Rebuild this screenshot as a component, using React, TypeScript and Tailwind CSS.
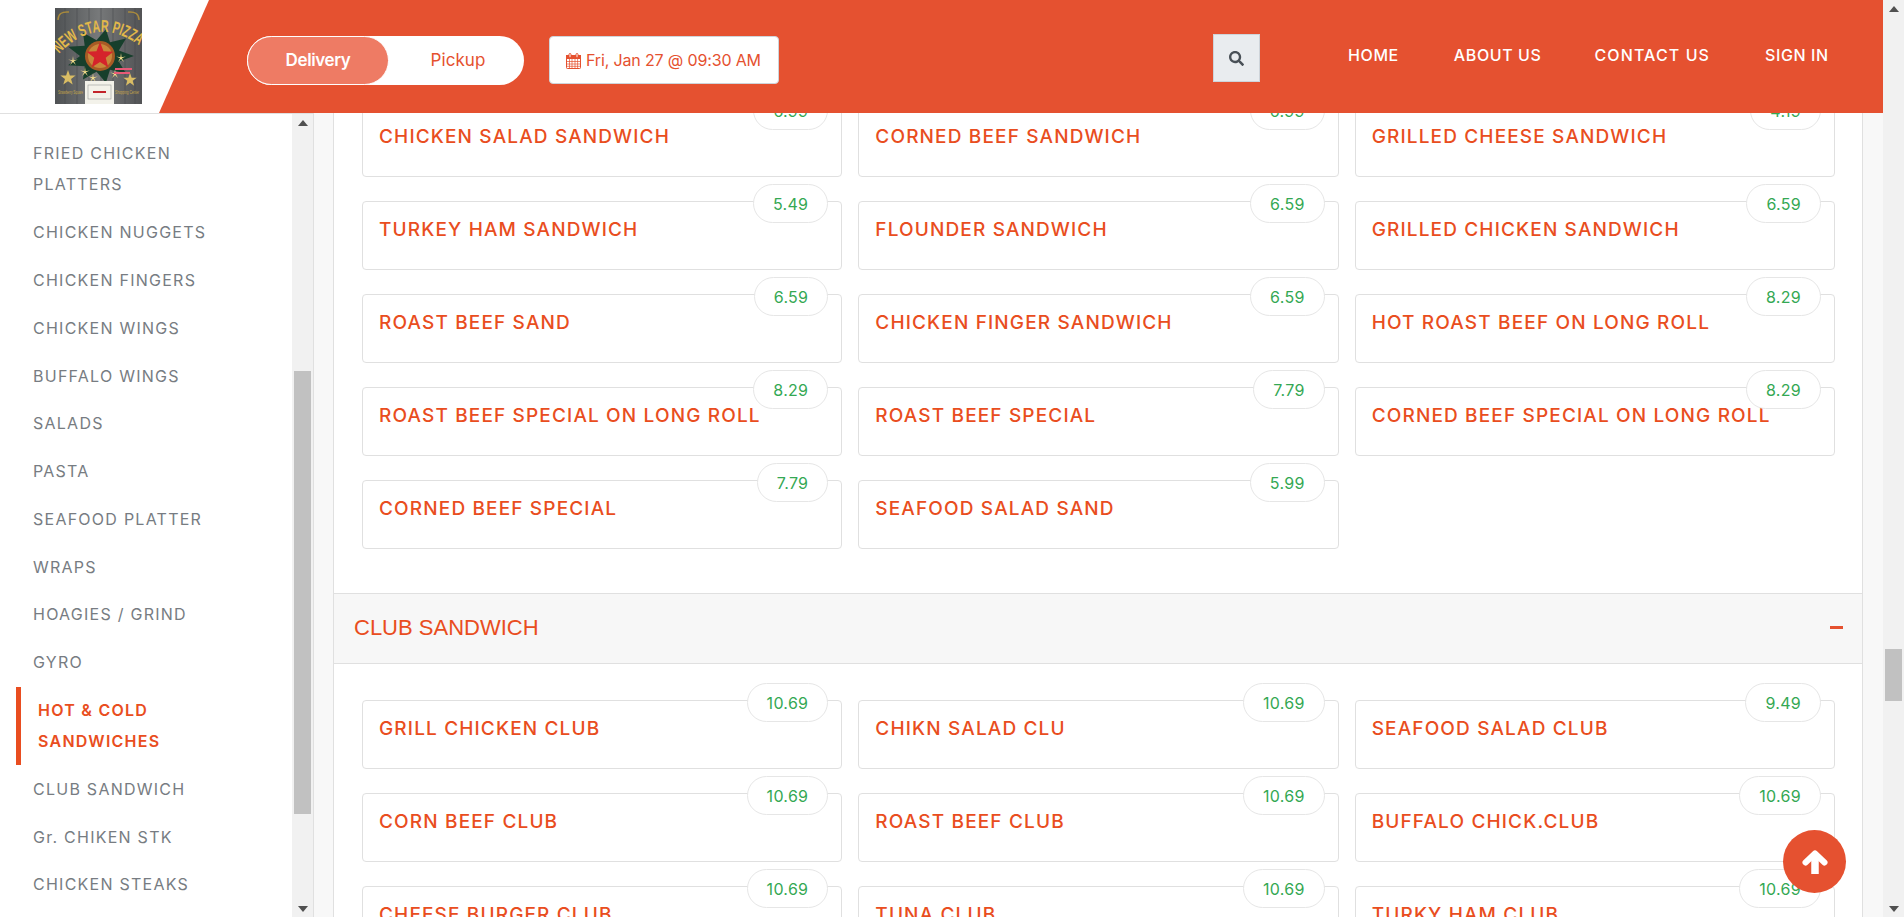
import { FaSearch } from "react-icons/fa";

const FONT = "[font-family:Inter,'Liberation_Sans',sans-serif]";

const menu: { t: string; active?: boolean }[] = [
  { t: "FRIED CHICKEN PLATTERS" },
  { t: "CHICKEN NUGGETS" },
  { t: "CHICKEN FINGERS" },
  { t: "CHICKEN WINGS" },
  { t: "BUFFALO WINGS" },
  { t: "SALADS" },
  { t: "PASTA" },
  { t: "SEAFOOD PLATTER" },
  { t: "WRAPS" },
  { t: "HOAGIES / GRIND" },
  { t: "GYRO" },
  { t: "HOT & COLD SANDWICHES", active: true },
  { t: "CLUB SANDWICH" },
  { t: "Gr. CHIKEN STK" },
  { t: "CHICKEN STEAKS" },
];

const hot: [string, string][] = [
  ["CHICKEN SALAD SANDWICH", "6.99"],
  ["CORNED BEEF SANDWICH", "6.99"],
  ["GRILLED CHEESE SANDWICH", "4.19"],
  ["TURKEY HAM SANDWICH", "5.49"],
  ["FLOUNDER SANDWICH", "6.59"],
  ["GRILLED CHICKEN SANDWICH", "6.59"],
  ["ROAST BEEF SAND", "6.59"],
  ["CHICKEN FINGER SANDWICH", "6.59"],
  ["HOT ROAST BEEF ON LONG ROLL", "8.29"],
  ["ROAST BEEF SPECIAL ON LONG ROLL", "8.29"],
  ["ROAST BEEF SPECIAL", "7.79"],
  ["CORNED BEEF SPECIAL ON LONG ROLL", "8.29"],
  ["CORNED BEEF SPECIAL", "7.79"],
  ["SEAFOOD SALAD SAND", "5.99"],
];

const club: [string, string][] = [
  ["GRILL CHICKEN CLUB", "10.69"],
  ["CHIKN SALAD CLU", "10.69"],
  ["SEAFOOD SALAD CLUB", "9.49"],
  ["CORN BEEF CLUB", "10.69"],
  ["ROAST BEEF CLUB", "10.69"],
  ["BUFFALO CHICK.CLUB", "10.69"],
  ["CHEESE BURGER CLUB", "10.69"],
  ["TUNA CLUB", "10.69"],
  ["TURKY HAM CLUB", "10.69"],
];

function Logo() {
  const burst = Array.from({ length: 18 }, (_, i) => {
    const a = (i / 18) * Math.PI * 2;
    const r = i % 2 === 0 ? 34 : 20;
    return `${45 + Math.cos(a) * r},${48 + Math.sin(a) * r * 0.8}`;
  }).join(" ");
  const star = (cx: number, cy: number, R: number, r: number) =>
    Array.from({ length: 10 }, (_, i) => {
      const a = -Math.PI / 2 + (i * Math.PI) / 5;
      const q = i % 2 === 0 ? R : r;
      return `${cx + Math.cos(a) * q},${cy + Math.sin(a) * q}`;
    }).join(" ");
  return (
    <svg width="87" height="96" viewBox="0 0 87 96" className="block">
      <defs>
        <linearGradient id="wood" x1="0" x2="1" y1="0" y2="0">
          <stop offset="0" stopColor="#4f5254" />
          <stop offset="0.5" stopColor="#77797a" />
          <stop offset="1" stopColor="#525355" />
        </linearGradient>
        <path id="arc" d="M4 46 Q42 6 85 38" fill="none" />
      </defs>
      <rect width="87" height="96" fill="url(#wood)" />
      {[10, 22, 34, 46, 58, 70, 80].map((x) => (
        <line key={x} x1={x} x2={x} y1="0" y2="96" stroke="#45474a" strokeWidth="1" opacity="0.5" />
      ))}
      <path d="M3 12 Q3 3 14 4 M73 4 Q84 3 84 12" stroke="#a98a3c" strokeWidth="1.5" fill="none" />
      <polygon points={burst} fill="#173f2c" />
      <text fontSize="17" fontWeight="700" fill="#e2b84a" fontFamily="'Liberation Sans',sans-serif">
        <textPath href="#arc" textLength="90" lengthAdjust="spacingAndGlyphs">NEW STAR PIZZA</textPath>
      </text>
      <circle cx="45" cy="48" r="15" fill="#a85b25" />
      <circle cx="45" cy="48" r="12" fill="#c9873b" />
      <polygon points={star(45, 48, 14, 6)} fill="#d5232b" />
      {[[18, 53], [30, 64], [66, 50], [60, 66], [38, 70]].map(([x, y]) => (
        <polygon key={`${x}-${y}`} points={star(x, y, 5, 1)} fill="#f4dd8c" />
      ))}
      <polygon points={star(13, 70, 8, 3.2)} fill="#d9bd64" />
      <polygon points={star(75, 72, 7, 2.8)} fill="#d9bd64" />
      <rect x="30" y="73" width="29" height="23" fill="#f3f2ea" />
      <rect x="33" y="77" width="23" height="14" fill="none" stroke="#999" strokeWidth="0.6" />
      <rect x="38" y="83" width="13" height="2" fill="#c3242a" />
      <rect x="60" y="60" width="17" height="2" fill="#e75a77" />
      <rect x="59" y="64" width="16" height="2" fill="#e75a77" />
      <text x="3" y="86" textLength="25" lengthAdjust="spacingAndGlyphs" fontSize="5" fill="#c9a849" fontFamily="'Liberation Sans',sans-serif">Strawberry Square</text>
      <text x="60" y="86" textLength="24" lengthAdjust="spacingAndGlyphs" fontSize="5" fill="#c9a849" fontFamily="'Liberation Sans',sans-serif">Shopping Center</text>
    </svg>
  );
}

function CalendarIcon() {
  return (
    <svg width="15" height="16" viewBox="0 0 15 16" className="mt-[3px] shrink-0" fill="none" stroke="#e5512f">
      <rect x="0.5" y="2.5" width="14" height="13" rx="0.8" />
      <rect x="0.5" y="2.5" width="14" height="3" fill="#e5512f" />
      <path d="M0.5 8.5h14M0.5 11h14M0.5 13.3h14M3.5 5.5v10M6 5.5v10M9 5.5v10M11.6 5.5v10" strokeWidth="0.7" />
      <rect x="3" y="0.5" width="2" height="4" rx="1" fill="#fff" />
      <rect x="10" y="0.5" width="2" height="4" rx="1" fill="#fff" />
    </svg>
  );
}

function ArrowUp() {
  return (
    <svg width="26" height="24" viewBox="0 0 26 24" fill="none" stroke="#fff">
      <path d="M13 24V6" strokeWidth="7.5" />
      <path d="M3.5 12.5 13 3.5l9.5 9" strokeWidth="6" strokeLinecap="round" strokeLinejoin="round" />
    </svg>
  );
}

function Card({ name, price }: { name: string; price: string }) {
  return (
    <div className="relative h-[69px] rounded-[4px] border border-[#e0e0e0] bg-white px-4 pt-[14px]">
      <span className="block whitespace-nowrap text-[19px] leading-[27px] font-[500] tracking-[1.15px] text-[#e94d20]">{name}</span>
      <span className="absolute top-[-18px] right-[13px] flex h-[39px] items-center rounded-[20px] border border-[#e6e6e6] bg-white px-[19px] text-[16px] font-[400] tracking-[0.3px] text-[#34a853]">
        {price}
      </span>
    </div>
  );
}

function Grid({ items }: { items: [string, string][] }) {
  return (
    <div className="grid grid-cols-3 gap-x-[16px] gap-y-[24px] pr-[27px] pl-[28px]">
      {items.map(([n, p]) => (
        <Card key={n} name={n} price={p} />
      ))}
    </div>
  );
}

function Up() {
  return <div className="h-0 w-0 border-x-[5px] border-b-[6px] border-x-transparent border-b-[#505050]" />;
}
function Down() {
  return <div className="h-0 w-0 border-x-[5px] border-t-[6px] border-x-transparent border-t-[#505050]" />;
}

export default function App() {
  return (
    <div className={`relative flex h-[917px] w-[1904px] overflow-hidden bg-white ${FONT}`}>
      <div className="flex w-[1883px] flex-col">
        <header className="relative z-10 flex h-[113px] shrink-0 bg-white">
          <div className="w-[159px] shrink-0 pt-[8px] pl-[55px]">
            <Logo />
          </div>
          <div className="flex flex-1 items-start bg-[#e55130] pt-[36px] pl-[88px] [clip-path:polygon(50px_0,100%_0,100%_100%,0_100%)]">
            <div className="flex h-[49px] w-[277px] shrink-0 rounded-[25px] bg-white">
              <div className="flex h-full w-[142px] items-center justify-center rounded-[25px] border border-white bg-[#ee7b64] text-[17px] font-[600] tracking-[-0.4px] text-white">
                Delivery
              </div>
              <div className="flex h-full flex-1 items-center justify-center pl-[3px] text-[17px] font-[400] tracking-[0.1px] text-[#e5512f]">
                Pickup
              </div>
            </div>
            <div className="ml-[25px] flex h-[48px] w-[230px] shrink-0 items-center gap-[5px] rounded-[4px] border border-[#ced4da] bg-white pb-[1px] pl-[16px] text-[16px] font-[400] tracking-[-0.15px] whitespace-nowrap text-[#e5512f]">
              <CalendarIcon />
              <span>Fri, Jan 27 @ 09:30 AM</span>
            </div>
            <div className="-mt-[2px] ml-[434px] flex h-[48px] w-[47px] shrink-0 items-center justify-center border border-[#ced4da] bg-[#e9ecef] text-[#495057]">
              <FaSearch className="mt-[1px] h-[15px] w-[15px]" />
            </div>
            <nav className="-mt-[2px] ml-[88px] flex pt-[9px] text-[16px] leading-[24px] font-[500] tracking-[0.6px] whitespace-nowrap text-white">
              <span>HOME</span>
              <span className="ml-[55px]">ABOUT US</span>
              <span className="ml-[53px] tracking-[1.1px]">CONTACT US</span>
              <span className="ml-[55px]">SIGN IN</span>
            </nav>
          </div>
        </header>

        <div className="flex min-h-0 flex-1">
          <aside className="flex h-full w-[314px] shrink-0 border-t border-r border-t-[#e0e0e0] border-r-[#e0e0e0]">
            <div className="min-w-0 flex-1 overflow-hidden pt-[16px]">
              <ul className="pr-[40px] pl-[16px] text-[16px] leading-[31px] tracking-[1.25px] text-[#777c82]">
                {menu.map((m) =>
                  m.active ? (
                    <li key={m.t} className="border-l-[5px] border-[#e94d20] py-[8.4px] pl-[17px] font-[600] text-[#e94d20]">
                      {m.t}
                    </li>
                  ) : (
                    <li key={m.t} className="py-[8.4px] pl-[17px]">
                      {m.t}
                    </li>
                  ),
                )}
              </ul>
            </div>
            <div className="flex w-[21px] shrink-0 flex-col items-center bg-[#f1f1f1]">
              <div className="flex h-[17px] shrink-0 items-center justify-center"><Up /></div>
              <div className="mt-[240px] h-[443px] w-[17px] shrink-0 bg-[#c1c1c1]" />
              <div className="mt-auto flex h-[17px] shrink-0 items-center justify-center"><Down /></div>
            </div>
          </aside>
          <div className="w-[19px] shrink-0 bg-[#f8f8f8]" />
          <main className="h-full w-[1530px] shrink-0 overflow-hidden border-x border-[#e0e0e0] bg-white">
            <div className="-mt-[5px]">
              <Grid items={hot} />
              <div className="mt-[44px] flex h-[71px] items-center justify-between border-y border-[#e0e0e0] bg-[#f7f7f7] pr-[19px] pb-[2px] pl-[20px]">
                <span className="[font-family:'Liberation_Sans',sans-serif] text-[22px] text-[#e94d20]">CLUB SANDWICH</span>
                <span className="h-[3px] w-[13px] bg-[#e5512f]" />
              </div>
              <div className="pt-[36px]">
                <Grid items={club} />
              </div>
            </div>
          </main>
          <div className="w-[20px] shrink-0 bg-[#f8f8f8]" />
        </div>
      </div>

      <div className="flex h-full w-[21px] shrink-0 flex-col items-center bg-[#f1f1f1]">
        <div className="flex h-[17px] shrink-0 items-center justify-center"><Up /></div>
        <div className="mt-[632px] h-[52px] w-[17px] shrink-0 bg-[#c1c1c1]" />
        <div className="mt-auto flex h-[17px] shrink-0 items-center justify-center"><Down /></div>
      </div>

      <div className="absolute top-[830px] left-[1783px] z-20 flex h-[63px] w-[63px] items-center justify-center rounded-full bg-[#e55130] text-white">
        <ArrowUp />
      </div>
    </div>
  );
}
